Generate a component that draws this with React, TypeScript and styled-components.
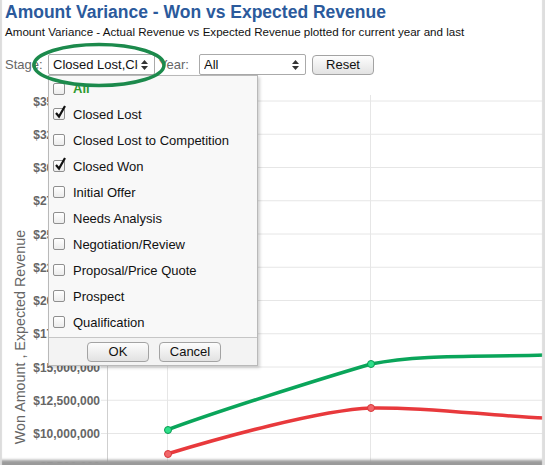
import React from "react";
import styled, { createGlobalStyle } from "styled-components";

const GlobalStyle = createGlobalStyle`
  html, body { margin: 0; padding: 0; background: #fff; }
  * { box-sizing: border-box; }
`;

const Page = styled.div`
  position: relative;
  width: 545px;
  height: 465px;
  overflow: hidden;
  background: #fff;
  font-family: "Liberation Sans", Arial, sans-serif;
  padding: 2px 0 0 5px;
  &::after {
    content: "";
    position: absolute;
    inset: 0;
    pointer-events: none;
    box-shadow: inset 3px 0 1px -1px #dcdcdc, inset -4px 0 1px -1px #dedede,
      inset 0 -7px 3px -2px #9a9a9a;
  }
`;

const Title = styled.h1`
  margin: 0;
  font-size: 17.5px;
  line-height: 20px;
  font-weight: bold;
  color: #2b5a9c;
`;

const Subtitle = styled.p`
  margin: 2px 0 0;
  font-size: 11.6px;
  line-height: 15px;
  color: #111;
`;

const Controls = styled.div`
  position: relative;
  display: flex;
  align-items: center;
  margin-top: 15px;
  height: 21px;
`;

const Label = styled.span<{ $w: number }>`
  width: ${(p) => p.$w}px;
  font-size: 13px;
  color: #666;
`;

const Select = styled.div<{ $w: number }>`
  position: relative;
  width: ${(p) => p.$w}px;
  height: 21px;
  border: 1px solid #aaa;
  border-radius: 2px;
  background: #fff;
  font-size: 13px;
  line-height: 19px;
  color: #111;
  padding: 0 16px 0 4px;
`;

const Value = styled.span`
  display: block;
  white-space: nowrap;
  overflow: hidden;
`;

const Arrows = styled.svg`
  position: absolute;
  right: 6px;
  top: 5px;
`;

const Button = styled.button<{ $w: number }>`
  width: ${(p) => p.$w}px;
  height: 20px;
  border: 1px solid #a3a3a3;
  border-radius: 4px;
  background: linear-gradient(#fdfdfd, #e2e2e2);
  font-family: "Liberation Sans", Arial, sans-serif;
  font-size: 13px;
  color: #111;
  padding: 0;
`;

const Gap = styled.span<{ $w: number }>`
  display: inline-block;
  width: ${(p) => p.$w}px;
`;

const Panel = styled.div`
  position: absolute;
  left: 43px;
  top: 21px;
  width: 210px;
  height: 291px;
  background: #f8f8f8;
  border: 1px solid #b9b9b9;
  box-shadow: 2px 2px 3px rgba(0, 0, 0, 0.18);
  display: flex;
  flex-direction: column;
  z-index: 2;
`;

const List = styled.div`
  display: flex;
  flex-direction: column;
  height: 261px;
`;

const Item = styled.div<{ $all?: boolean }>`
  display: flex;
  align-items: center;
  height: 26px;
  padding-left: 4px;
  font-size: 13px;
  color: ${(p) => (p.$all ? "#2f9a2f" : "#111")};
  font-weight: ${(p) => (p.$all ? "bold" : "normal")};
  &:first-child {
    height: 25px;
  }
`;

const Box = styled.span`
  position: relative;
  width: 12px;
  height: 12px;
  border: 1px solid #8f8f8f;
  border-radius: 2px;
  background: linear-gradient(#fff, #ececec);
  margin-right: 8px;
  flex: none;
`;

const Check = styled.svg`
  position: absolute;
  left: 0px;
  top: -4px;
`;

const Footer = styled.div`
  flex: 1;
  border-top: 1px solid #c6c6c6;
  display: flex;
  justify-content: center;
  align-items: center;
  gap: 10px;
  padding-left: 2px;
  background: #f3f3f3;
`;

const Ellipse = styled.svg`
  position: absolute;
  left: 25px;
  top: -13px;
  z-index: 3;
  pointer-events: none;
`;

const ChartSvg = styled.svg`
  display: block;
  margin: 5px 0 0 -5px;
`;

const stages = [
  { name: "All", checked: false, all: true },
  { name: "Closed Lost", checked: true },
  { name: "Closed Lost to Competition", checked: false },
  { name: "Closed Won", checked: true },
  { name: "Initial Offer", checked: false },
  { name: "Needs Analysis", checked: false },
  { name: "Negotiation/Review", checked: false },
  { name: "Proposal/Price Quote", checked: false },
  { name: "Prospect", checked: false },
  { name: "Qualification", checked: false },
];

const labels = [
  "$35,000,000",
  "$32,500,000",
  "$30,000,000",
  "$27,500,000",
  "$25,000,000",
  "$22,500,000",
  "$20,000,000",
  "$17,500,000",
  "$15,000,000",
  "$12,500,000",
  "$10,000,000",
  "$7,500,000",
];

const ArrowIcon = () => (
  <Arrows width="7" height="10" viewBox="0 0 7 10">
    <path d="M3.5 0 L7 4 H0 Z M0 6 H7 L3.5 10 Z" fill="#333" />
  </Arrows>
);

const Chart = () => (
  <ChartSvg width="545" height="385" viewBox="0 80 545 385">
    {labels.map((l, i) => {
      const y = 101 + i * 33.25;
      return (
        <g key={l}>
          <line x1="101" y1={y} x2="545" y2={y} stroke="#e6e6e6" strokeWidth="1" />
          <text
            x="100"
            y={y + 4.5}
            textAnchor="end"
            fontFamily="'Liberation Sans', Arial, sans-serif"
            fontWeight="bold"
            fontSize="12"
            fill="#666"
          >
            {l}
          </text>
        </g>
      );
    })}
    <line x1="107.5" y1="95" x2="107.5" y2="465" stroke="#cfcfcf" strokeWidth="1" />
    <line x1="167.5" y1="95" x2="167.5" y2="465" stroke="#e6e6e6" strokeWidth="1" />
    <line x1="370.5" y1="95" x2="370.5" y2="465" stroke="#e6e6e6" strokeWidth="1" />
    <text
      transform="translate(25 337) rotate(-90)"
      textAnchor="middle"
      fontFamily="'Liberation Sans', Arial, sans-serif"
      fontSize="14.3"
      fill="#666"
    >
      Won Amount , Expected Revenue
    </text>
    <path
      d="M167 430 C 215 412 320 379 371 364 C 420 354 480 357 545 355"
      fill="none"
      stroke="#0aa55a"
      strokeWidth="3.5"
      strokeLinecap="round"
    />
    <path
      d="M167 454 C 220 438 320 410 371 408 C 430 407 490 416 545 418"
      fill="none"
      stroke="#e8393c"
      strokeWidth="3.5"
      strokeLinecap="round"
    />
    <circle cx="168" cy="430" r="3.5" fill="#2ee08a" stroke="#0a9a52" strokeWidth="1" />
    <circle cx="371" cy="364" r="3.5" fill="#2ee08a" stroke="#0a9a52" strokeWidth="1" />
    <circle cx="168" cy="454" r="3.5" fill="#f2666a" stroke="#d8373a" strokeWidth="1" />
    <circle cx="371" cy="408" r="3.5" fill="#f2666a" stroke="#d8373a" strokeWidth="1" />
  </ChartSvg>
);

export default function App() {
  return (
    <Page>
      <GlobalStyle />
      <Title>Amount Variance - Won vs Expected Revenue</Title>
      <Subtitle>
        Amount Variance - Actual Revenue vs Expected Revenue plotted for current year and last
      </Subtitle>
      <Controls>
        <Label $w={43}>Stage:</Label>
        <Select $w={107}>
          <Value>Closed Lost,Closed Won</Value>
          <ArrowIcon />
        </Select>
        <Gap $w={4} />
        <Label $w={40}>Year:</Label>
        <Select $w={107}>
          <Value>All</Value>
          <ArrowIcon />
        </Select>
        <Gap $w={6} />
        <Button $w={62}>Reset</Button>
        <Ellipse width="142" height="48" viewBox="0 0 142 48">
          <ellipse cx="69" cy="24" rx="65" ry="20.5" fill="none" stroke="#1c8a4c" strokeWidth="3.5" />
        </Ellipse>
        <Panel>
          <List>
            {stages.map((s) => (
              <Item key={s.name} $all={s.all}>
                <Box>
                  {s.checked && (
                    <Check width="13" height="14" viewBox="0 0 13 14">
                      <path d="M2 8 L5 11.5 L11 1" fill="none" stroke="#111" strokeWidth="2.2" />
                    </Check>
                  )}
                </Box>
                {s.name}
              </Item>
            ))}
          </List>
          <Footer>
            <Button $w={62}>OK</Button>
            <Button $w={62}>Cancel</Button>
          </Footer>
        </Panel>
      </Controls>
      <Chart />
    </Page>
  );
}
